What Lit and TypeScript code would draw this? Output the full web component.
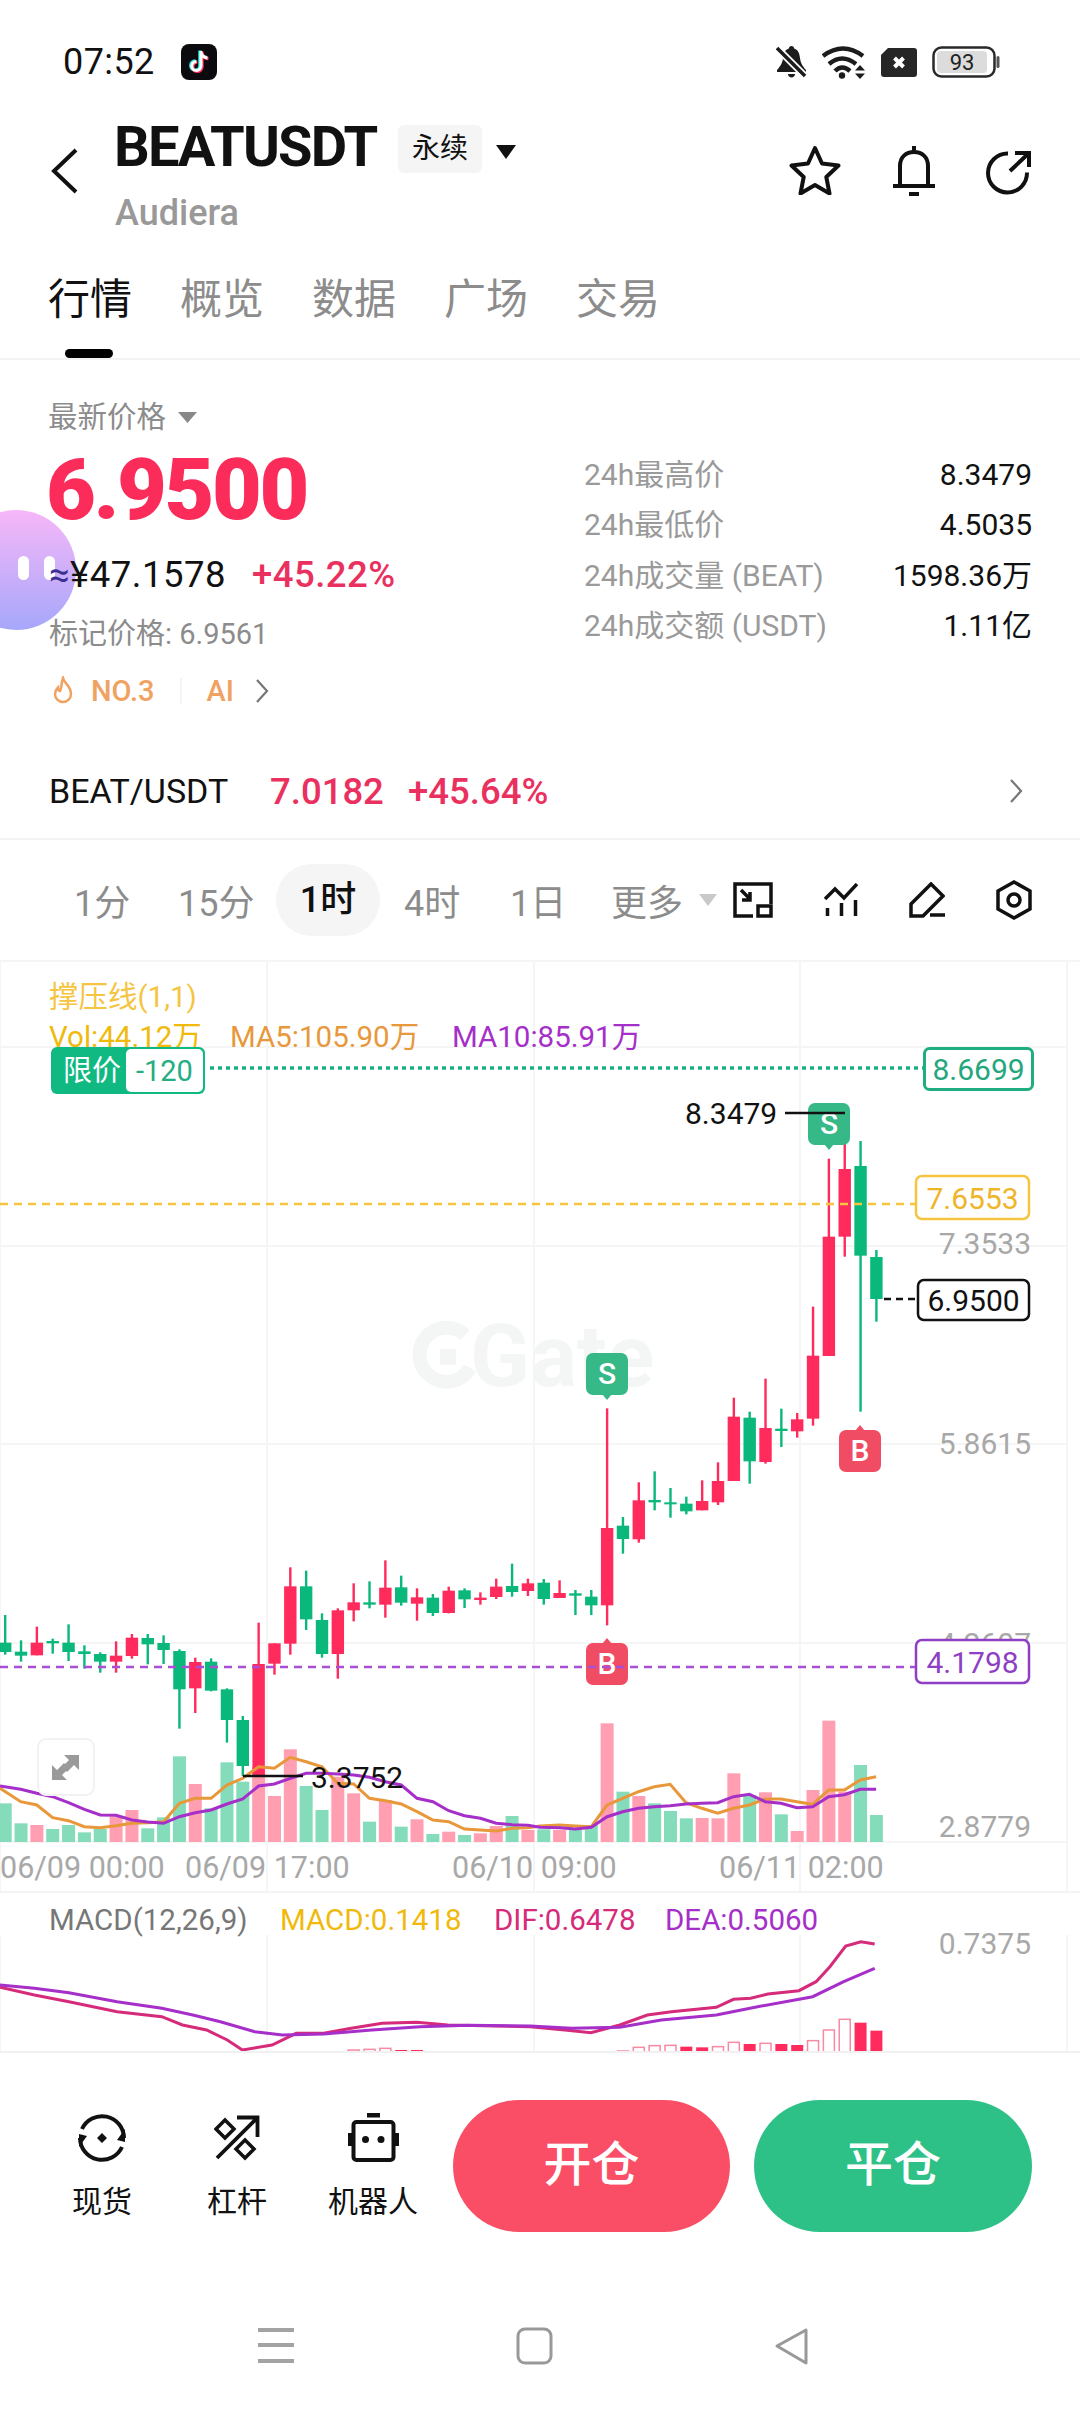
import { LitElement, html, css, svg } from "lit";
import { customElement } from "lit/decorators.js";

const X = (i: number) => 5.2 + 15.84 * i;
type C = [string, number, number, number, number];
// colour, body top, body bottom, wick top, wick bottom — measured in zoom rows
const c8: C[] = [
  ["g",488,516,405,524],["g",515,527,481,545],["r",488,526,440,526],["g",483,490,476,521],["g",488,516,433,543],
  ["g",514,522,496,566],["g",522,545,517,578],["r",527,545,484,578],["r",473,528,462,536],["g",474,493,462,553],
  ["g",489,510,466,552],["g",513,628,508,746],["r",546,625,533,699],["g",545,632,535,634],["g",628,720,625,788],
  ["g",720,858,708,888],["r",552,888,428,888],["r",490,551,490,584],["r",319,491,262,524],["g",319,418,272,450],
  ["g",420,522,400,533],["r",391,522,385,596],["r",367,391,310,424],["g",367,374,304,385],["r",323,374,241,413],
  ["g",322,368,287,377],["r",352,371,325,422],["g",353,399,342,408],["r",332,399,320,400],["g",331,358,325,384],
  ["r",353,360,337,374],["r",320,351,296,357],["g",318,336,251,350],["r",310,333,296,348],
];
const c4: C[] = [
  ["g",638,687,627,704],["r",669,684,631,684],["g",670,677,660,735],["g",680,706,660,735],["r",474,706,115,766],
  ["g",467,507,441,551],["r",391,508,337,518],["g",390,397,304,421],["g",397,403,354,443],["g",401,424,380,433],
  ["r",393,421,331,421],["r",333,397,277,405],["r",140,333,83,333],["g",143,274,125,341],["r",174,276,26,281],
  ["g",176,183,116,231],["r",148,184,129,203],
];
const c7: C[] = [
  ["r",827,1016,680,1037],["r",470,828,236,828],["r",267,470,190,530],["g",258,527,183,995],["g",531,657,510,725],
];
const candles: C[] = [
  ...c8.map(([k,a,b,c,d]) => [k,1480+a/3,1480+b/3,1480+c/3,1480+d/3] as C),
  ...c4.map(([k,a,b,c,d]) => [k,1370+a/3,1370+b/3,1370+c/3,1370+d/3] as C),
  ...c7.map(([k,a,b,c,d]) => [k,1080+a/3,1080+b/3,1080+c/3,1080+d/3] as C),
];
const volTops = [970,1030,1035,1047,1035,1057,1047,1010,990,1045,1012,829,912,985,847,905,860,948,808,918,990,890,940,1025,960,1040,1018,1062,1055,1065,1060,1038,1008,1050,1048,1050,1050,1035,730,935,948,970,993,1015,1014,1015,880,945,937,1003,1053,930,722,935,855,1005];

const pts8 = (a: number[][]) => a.map(([x, y]) => `${(x / 2.904).toFixed(1)},${(1480 + y / 3).toFixed(1)}`);
const pts9 = (a: number[][]) => a.map(([x, y]) => `${(540 + x / 2.904).toFixed(1)},${(1480 + y / 3).toFixed(1)}`);
const pts5 = (a: number[][]) => a.map(([x, y]) => `${(x / 1.452).toFixed(1)},${(1670 + y / 3).toFixed(1)}`).join(" ");

const ma5 = [...pts8([[0,925],[60,965],[107,975],[153,1013],[199,1022],[245,1040],[291,1043],[337,1037],[383,1030],[429,1028],[475,1025],[521,970],[567,955],[613,955],[659,915],[705,895],[751,860],[797,865],[843,832],[889,845],[935,860],[981,910],[1027,912],[1073,955],[1119,962],[1165,972],[1211,995],[1257,1020],[1303,1025],[1349,1047],[1395,1050],[1441,1053],[1487,1045],[1533,1043]]),
  ...pts9([[0,1038],[57,1035],[103,1038],[149,1040],[195,975],[240,955],[286,935],[332,920],[378,913],[424,968],[470,985],[516,1000],[562,985],[608,975],[654,957],[700,957],[746,965],[792,973],[838,930],[884,930],[930,900],[976,890]])].join(" ");
const ma10 = [...pts8([[0,918],[60,928],[107,940],[153,950],[199,968],[245,988],[291,1005],[337,1006],[383,1020],[429,1026],[475,1030],[521,1010],[567,998],[613,990],[659,972],[705,957],[751,918],[797,912],[843,895],[889,880],[935,880],[981,882],[1027,885],[1073,892],[1119,905],[1165,915],[1211,955],[1257,965],[1303,992],[1349,1007],[1395,1015],[1441,1030],[1487,1034],[1533,1036]]),
  ...pts9([[0,1042],[57,1043],[103,1047],[149,1042],[195,1010],[240,995],[286,985],[332,980],[378,977],[424,972],[470,970],[516,968],[562,950],[608,943],[654,965],[700,970],[746,983],[792,980],[838,950],[884,944],[930,928],[976,928]])].join(" ");
const dif = pts5([[0,952],[50,975],[100,995],[170,1025],[235,1040],[265,1065],[300,1080],[330,1110],[352,1140],[395,1125],[430,1090],[470,1090],[510,1075],[555,1060],[605,1057],[650,1065],[720,1068],[770,1070],[820,1080],[858,1088],[900,1065],[940,1035],[975,1025],[1040,1012],[1065,988],[1090,985],[1115,972],[1160,962],[1185,935],[1205,890],[1228,828],[1250,815],[1270,822]]);
const dea = pts5([[0,945],[50,955],[100,968],[170,995],[235,1015],[280,1035],[320,1055],[370,1085],[410,1095],[470,1092],[540,1080],[610,1070],[680,1066],[770,1068],[830,1075],[900,1072],[960,1050],[1040,1035],[1100,1010],[1180,980],[1225,935],[1270,895]]);
// MACD histogram: candle index, top in zoom rows, hollow?
const hist: [number, number, boolean][] = [[22,1140,true],[23,1138,true],[24,1135,true],[25,1140,false],[26,1140,false],[39,1143,true],[40,1132,true],[41,1127,true],[42,1126,true],[43,1130,false],[44,1132,false],[45,1130,true],[46,1117,true],[47,1122,false],[48,1120,true],[49,1122,false],[50,1125,false],[51,1112,true],[52,1080,true],[53,1048,true],[54,1058,false],[55,1082,false]];

const RED = "#ff2b5c", GREEN = "#09b87a";

const badge = (x: number, y: number, t: string, sell: boolean) => svg`
  <g>
    <rect x=${x} y=${y} width="42" height="42" rx="7" fill=${sell ? "#37b887" : "#f04c64"}></rect>
    ${sell
      ? svg`<path d="M${x + 16} ${y + 41}h10l-5 6z" fill="#37b887"></path>`
      : svg`<path d="M${x + 16} ${y + 1}h10l-5 -6z" fill="#f04c64"></path>`}
    <text class="badge" x=${x + 21} y=${y + 31} text-anchor="middle">${t}</text>
  </g>`;

@customElement("app-root")
export class AppRoot extends LitElement {
  static styles = css`
    :host { display: block; width: 1080px; height: 2412px; background: #fff; overflow: hidden; position: relative;
      font-family: Roboto, "Noto Sans CJK SC", sans-serif; color: #111; }
    svg { display: block; }
    .status { height: 115px; padding: 43px 80px 0 63px; box-sizing: border-box; display: flex; align-items: flex-start; }
    .time { font-size: 36px; line-height: 38px; width: 118px; letter-spacing: .4px; }
    .tt { margin-top: 1px; }
    .status-right { margin-left: auto; margin-top: 2px; display: flex; align-items: center; gap: 15px; }
    .header { height: 125px; display: flex; position: relative; box-sizing: border-box; padding-left: 50px; }
    .back { margin-top: 33px; width: 65px; }
    .title-row { display: flex; align-items: flex-start; height: 60px; margin-top: 2px; }
    .sym { width: 283px; margin-left: -1px; margin-right: 1px; font-size: 56px; font-weight: 700; letter-spacing: -1.8px; line-height: 60px; }
    .tag { margin-top: 8px; background: #f5f5f5; border-radius: 6px; width: 84px; height: 48px; font-size: 28px; line-height: 48px; text-align: center; }
    .tri { margin: 28px 0 0 14px; }
    .name { font-size: 36px; font-weight: 500; color: #999; line-height: 44px; margin-top: 14px; }
    .hd-icons { margin-left: auto; margin-right: 48px; margin-top: 30px; display: flex; align-items: flex-start; gap: 49.5px; }
    .share { margin-top: 5px; }
    .tabs { height: 120px; box-sizing: border-box; border-bottom: 2px solid #f3f3f3; display: flex; gap: 48px; padding: 35px 0 0 48px; position: relative; font-size: 42px; line-height: 50px; color: #8c8c8c; }
    .tabs .on { color: #111; }
    .tabs i { position: absolute; left: 65px; top: 109px; width: 48px; height: 9px; border-radius: 5px; background: #000; }
    .info { height: 480px; box-sizing: border-box; padding: 37px 48px 0 49px; border-bottom: 2px solid #f3f3f3; }
    .info-top { display: flex; height: 345px; }
    .left { width: 535px; }
    .latest { display: flex; align-items: center; gap: 12px; font-size: 29.5px; line-height: 40px; color: #8c8c8c; margin-left: -1px; }
    .price { font-size: 86px; font-weight: 900; line-height: 90px; margin: 8px 0 0 -3px; color: #fb2c5a; letter-spacing: -2.4px; }
    .yen { display: flex; gap: 26px; font-size: 36.5px; line-height: 44px; margin-top: 18px; letter-spacing: .5px; position: relative; z-index: 2; }
    .yen .approx { color: #3b2f8f; }
    .yen .chg { color: #ea305e; font-weight: 500; }
    .mark { font-size: 29px; line-height: 40px; margin-top: 17px; color: #8c8c8c; }
    .tags { display: flex; align-items: center; font-size: 29px; line-height: 40px; margin-top: 17px; color: #f0a262; font-weight: 500; }
    .flame { margin: 0 16px 0 2px; }
    .tags u { width: 2px; height: 26px; background: #f4f4f4; margin: 0 25px; }
    .ai-chev { margin-left: 20px; }
    .right { margin-top: 58px; width: 448px; }
    .stat { display: flex; justify-content: space-between; height: 50.3px; line-height: 40px; font-size: 30px; color: #9a9a9a; }
    .stat span:last-child { color: #111; }
    .pair { height: 98px; display: flex; align-items: center; font-size: 36.5px; color: #ea305e; font-weight: 500; }
    .pair .p1 { width: 221px; color: #111; font-size: 34px; font-weight: 400; }
    .pair .p2 { width: 138px; }
    .pair svg { margin-left: auto; margin-right: 8px; }
    .tf { height: 122px; box-sizing: border-box; border-bottom: 2px solid #f5f5f5; display: flex; position: relative; align-items: center; font-size: 36px; color: #8c8c8c; white-space: nowrap; }
    .tf span { flex: none; text-align: center; }
    .t1 { margin-left: 74px; width: 53px; }
    .t2 { margin-left: 51px; width: 74px; }
    .t3 { margin-left: 24px; background: #f5f5f5; border-radius: 36px; height: 72px; line-height: 72px; width: 104px; color: #111; font-weight: 500; }
    .t4 { margin-left: 24px; width: 56px; }
    .t5 { margin-left: 50px; width: 52px; }
    .t6 { margin-left: 49px; width: 72px; }
    .t-tri { margin-left: 16px; }
    .tf-icons { margin-left: auto; margin-right: 48px; display: flex; align-items: center; gap: 51px; }
    .chart { height: 1091px; overflow: hidden; }
    .gl { stroke: #f5f5f5; stroke-width: 2; }
    .ax { font-size: 30px; fill: #a8a8a8; }
    .dt { font-size: 30.5px; fill: #a8a8a8; }
    .lg { font-size: 29.5px; }
    .lv { font-size: 30px; }
    .badge { font-size: 30px; fill: #fff; font-weight: 500; }
    .wm { font-size: 88px; font-weight: 700; fill: #f4f6f6; }
    .lim { font-size: 29px; }
    .batt { font-size: 22px; }
    .bottom { height: 359px; position: relative; }
    .tool { position: absolute; top: 60px; width: 120px; display: flex; flex-direction: column; align-items: center; font-size: 30px; line-height: 40px; }
    .tool svg { height: 50px; margin-bottom: 19px; }
    .l1 { left: 42px; } .l2 { left: 177px; } .l3 { left: 313px; }
    .btn { position: absolute; top: 47px; height: 132px; border-radius: 66px; color: #fff; font-size: 48px; font-weight: 500; line-height: 130px; text-align: center; }
    .open { left: 453px; width: 277px; background: #f94e66; }
    .close { left: 754px; width: 278px; background: #2dc187; }
    .nav { position: absolute; top: 274px; left: 0; width: 100%; }
    .bubble { position: absolute; left: -44px; top: 510px; width: 120px; height: 120px; border-radius: 60px; background: linear-gradient(180deg, #f6b0f8, #9d9efb); opacity: .9; z-index: 1; }
    .bubble i { position: absolute; top: 46px; width: 11px; height: 24px; border-radius: 6px; background: #fff; }
    .bp1 { left: 62px; } .bp2 { left: 88px; }
  `;

  render() {
    return html`
      <div class="status">
        <div class="time">07:52</div>
        <svg class="tt" width="36" height="36" viewBox="0 0 36 36">
          <rect width="36" height="36" rx="8" fill="#0b0b0f"></rect>
          <path d="M20 7v15a4.6 4.6 0 1 1-4.6-4.6M20 8c.6 3.6 3 5.6 6.5 6" fill="none" stroke="#25f4ee" stroke-width="3.4" transform="translate(-1 -.5)"></path>
          <path d="M20 7v15a4.6 4.6 0 1 1-4.6-4.6M20 8c.6 3.6 3 5.6 6.5 6" fill="none" stroke="#fe2c55" stroke-width="3.4" transform="translate(1 .7)"></path>
          <path d="M20 7v15a4.6 4.6 0 1 1-4.6-4.6M20 8c.6 3.6 3 5.6 6.5 6" fill="none" stroke="#fff" stroke-width="3"></path>
        </svg>
        <div class="status-right">
          <svg width="31" height="34" viewBox="0 0 31 34"><path d="M15.500 1c-1.600 0-2.500 1-2.700 2.400C8.500 5 7.500 8.500 7 13c-.4 4.500-2 7.500-6 12v2h29v-2c-4-4.500-5.500-7.500-6-12-.5-4.500-1.500-8-5.800-9.600C18 2 17.100 1 15.500 1zM12 29h7c0 2-1.700 3.500-3.500 3.500S12 31 12 29z" fill="#1c1c1c"></path><path d="M1 3l28 28" stroke="#fff" stroke-width="7"></path><path d="M1 3l28 28" stroke="#1c1c1c" stroke-width="3.500"></path></svg>
          <svg width="44" height="33" viewBox="0 0 44 33"><path d="M1 10Q21-5 41 10M7 18Q20 7 34 18M13 25Q20 18 28 25" fill="none" stroke="#1c1c1c" stroke-width="4.500"></path><circle cx="20" cy="29.500" r="3.200" fill="#1c1c1c"></circle><path d="M38 19l5 5.500H33zM38 33l5-5.500H33z" fill="#1c1c1c"></path></svg>
          <svg width="36" height="29" viewBox="0 0 36 29"><path d="M7 0h26a3 3 0 0 1 3 3v23a3 3 0 0 1-3 3H3a3 3 0 0 1-3-3V7z" fill="#262626"></path><path d="M13.500 10l9 9M22.500 10l-9 9" stroke="#fff" stroke-width="4"></path></svg>
          <svg width="68" height="32" viewBox="0 0 68 32"><rect x="1.500" y="1.500" width="61" height="29" rx="8" fill="#fff" stroke="#2a2a2a" stroke-width="2.500"></rect><rect x="5" y="5" width="50" height="22" rx="4" fill="#dcdcdc"></rect><rect x="64.500" y="10" width="3" height="12" rx="1.500" fill="#555"></rect><text class="batt" x="30" y="24" text-anchor="middle" fill="#222">93</text></svg>
        </div>
      </div>

      <div class="header">
        <div class="back"><svg width="30" height="46" viewBox="0 0 30 46"><path d="M26 2L4 23l22 21" fill="none" stroke="#111" stroke-width="4"></path></svg></div>
        <div>
          <div class="title-row">
            <div class="sym">BEATUSDT</div>
            <div class="tag">永续</div>
            <svg class="tri" width="20" height="14" viewBox="0 0 20 14"><path d="M0 0h20L10 14z" fill="#111"></path></svg>
          </div>
          <div class="name">Audiera</div>
        </div>
        <div class="hd-icons">
          <svg width="52" height="50" viewBox="0 0 52 50"><path d="M26 3l7 15.500 16.500 2-12.200 11.500 3.200 16.500L26 40l-14.500 8.500L14.700 32 2.500 20.500l16.500-2z" fill="none" stroke="#111" stroke-width="4" stroke-linejoin="round"></path></svg>
          <svg width="46" height="52" viewBox="0 0 46 52"><path d="M23 1v6M9 41V21C9 12 15 7 23 7s14 5 14 14v20M2 41h42M18 49h10" fill="none" stroke="#111" stroke-width="4"></path></svg>
          <svg class="share" width="46" height="46" viewBox="0 0 46 46"><path d="M41 22.500A19.500 19.500 0 1 1 22 3.500M24 21L43 3M29 3h14v14" fill="none" stroke="#111" stroke-width="4"></path></svg>
        </div>
      </div>

      <div class="tabs">
        <span class="on">行情</span><span>概览</span><span>数据</span><span>广场</span><span>交易</span><i></i>
      </div>

      <div class="info">
        <div class="info-top">
          <div class="left">
            <div class="latest">最新价格 <svg width="19" height="11" viewBox="0 0 19 11"><path d="M0 0h19L9.500 11z" fill="#888"></path></svg></div>
            <div class="price">6.9500</div>
            <div class="yen"><span><span class="approx">≈</span>¥47.1578</span><span class="chg">+45.22%</span></div>
            <div class="mark">标记价格: 6.9561</div>
            <div class="tags">
              <svg class="flame" width="24" height="30" viewBox="0 0 24 30"><path d="M12 2c1 5 8 8 8 16a8 8 0 0 1-16 0c0-3 1.500-5 3-6.500 0 2 1 3.500 2 3.500 2-3 1-8 3-13z" fill="none" stroke="#f0a262" stroke-width="2.500"></path></svg>
              <span>NO.3</span><u></u><span>AI</span>
              <svg class="ai-chev" width="16" height="26" viewBox="0 0 16 26"><path d="M3 2l10 11L3 24" fill="none" stroke="#777" stroke-width="2.200"></path></svg>
            </div>
          </div>
          <div class="right">
            <div class="stat"><span>24h最高价</span><span>8.3479</span></div>
            <div class="stat"><span>24h最低价</span><span>4.5035</span></div>
            <div class="stat"><span>24h成交量 (BEAT)</span><span>1598.36万</span></div>
            <div class="stat"><span>24h成交额 (USDT)</span><span>1.11亿</span></div>
          </div>
        </div>
        <div class="pair">
          <span class="p1">BEAT/USDT</span><span class="p2">7.0182</span><span>+45.64%</span>
          <svg width="16" height="26" viewBox="0 0 16 26"><path d="M3 2l10 11L3 24" fill="none" stroke="#777" stroke-width="2.200"></path></svg>
        </div>
      </div>

      <div class="tf">
        <span class="t1">1分</span>
        <span class="t2">15分</span>
        <span class="t3">1时</span>
        <span class="t4">4时</span>
        <span class="t5">1日</span>
        <span class="t6">更多</span>
        <svg class="t-tri" width="18" height="12" viewBox="0 0 18 12"><path d="M0 0h18L9 12z" fill="#c9c9c9"></path></svg>
        <div class="tf-icons">
          <svg width="40" height="36" viewBox="0 0 40 36"><path d="M20 34H2V2h36v20" fill="none" stroke="#111" stroke-width="3.500"></path><rect x="25" y="24" width="13" height="10" fill="none" stroke="#111" stroke-width="3.500"></rect><path d="M8 8l8.500 8.500M17 10v8H9" fill="none" stroke="#111" stroke-width="3.500"></path></svg>
          <svg width="34" height="34" viewBox="0 0 34 34"><path d="M1 16L11 6l9 9L33 1" fill="none" stroke="#111" stroke-width="3.500"></path><path d="M3.500 25v8M17.500 20v13M31.500 17v16" stroke="#111" stroke-width="3.500"></path></svg>
          <svg width="36" height="36" viewBox="0 0 36 36"><path d="M2 22L22 2l12 12-20 20H2zM21 33h15" fill="none" stroke="#111" stroke-width="3.500"></path></svg>
          <svg width="36" height="40" viewBox="0 0 36 40"><path d="M18 2l16 9v18l-16 9-16-9V11z" fill="none" stroke="#111" stroke-width="3.500"></path><circle cx="18" cy="20" r="6" fill="none" stroke="#111" stroke-width="3.500"></circle></svg>
        </div>
      </div>

      <div class="chart">${this.chart()}</div>

      <div class="bottom">
        <div class="tool l1">
          <svg width="50" height="50" viewBox="0 0 50 50"><path d="M5 16A22 22 0 0 1 47 25M45 34A22 22 0 0 1 3 25" fill="none" stroke="#111" stroke-width="4"></path><path d="M25 20l5 5-5 5-5-5zM48 16v13l-8-2zM2 34V21l8 2z" fill="#111"></path></svg>
          现货
        </div>
        <div class="tool l2">
          <svg width="46" height="46" viewBox="0 0 46 46"><path d="M3 43L43 3M23 2.500h20.500V22" fill="none" stroke="#111" stroke-width="3.800"></path><path d="M11 5l9 9-9 9-9-9zM31 25l9 9-9 9-9-9z" fill="none" stroke="#111" stroke-width="3.500"></path></svg>
          杠杆
        </div>
        <div class="tool l3">
          <svg width="51" height="50" viewBox="0 0 51 50"><path d="M19 0h13v4.500H19zM0 20h4v13H0zM47 20h4v13h-4z" fill="#111"></path><rect x="5.500" y="9" width="40" height="38" rx="3" fill="none" stroke="#111" stroke-width="4"></rect><circle cx="17.500" cy="26.500" r="3.500" fill="#111"></circle><circle cx="33" cy="26.500" r="3.500" fill="#111"></circle></svg>
          机器人
        </div>
        <div class="btn open">开仓</div>
        <div class="btn close">平仓</div>
        <svg class="nav" width="1080" height="40" viewBox="0 0 1080 40">
          <path d="M258 3h36M258 18h36M258 34h36" stroke="#a3a3a3" stroke-width="4"></path>
          <rect x="518" y="2" width="33" height="34" rx="7" fill="none" stroke="#999" stroke-width="3"></rect>
          <path d="M806 3L777 19l29 17z" fill="none" stroke="#999" stroke-width="3" stroke-linejoin="round"></path>
        </svg>
      </div>

      <div class="bubble"><i class="bp1"></i><i class="bp2"></i></div>
    `;
  }

  chart() {
    return svg`<svg width="1080" height="1091" viewBox="0 962 1080 1091">
      <defs><clipPath id="mc"><rect x="0" y="1930" width="1080" height="121"></rect></clipPath></defs>
      ${[1047, 1246, 1444, 1643, 1842].map((y) => svg`<line class="gl" x1="0" x2="1066" y1=${y} y2=${y}></line>`)}
      ${[0, 267, 534, 800, 1067].map((x) => svg`<line class="gl" x1=${x} x2=${x} y1="962" y2="1892"></line><line class="gl" x1=${x} x2=${x} y1="1935" y2="2053"></line>`)}
      <line x1="0" x2="1080" y1="1892" y2="1892" stroke="#f4f4f4" stroke-width="2"></line>
      <line x1="0" x2="1080" y1="2052" y2="2052" stroke="#f1f1f1" stroke-width="2"></line>

      <text class="ax" x="1031" y="1654" text-anchor="end">4.2607</text>

      <path d="M465 1335A27 27 0 1 0 470 1368" fill="none" stroke="#f4f6f6" stroke-width="14"></path>
      <rect x="440" y="1349" width="16" height="16" fill="#f4f6f6"></rect>
      <text class="wm" x="470" y="1386">Gate</text>

      ${volTops.map((t, i) => {
        const y = 1480 + t / 3;
        return svg`<rect x=${X(i) - 6.5} y=${y} width="13" height=${1842 - y} fill=${candles[i][0] === "r" ? "#ff9fb1" : "#85dcbb"}></rect>`;
      })}

      ${candles.map(([k, a, b, c, d], i) => svg`
        <rect x=${X(i) - 1.2} y=${c} width="2.400" height=${d - c} fill=${k === "r" ? RED : GREEN}></rect>
        <rect x=${X(i) - 6.2} y=${a} width="12.400" height=${Math.max(b - a, 2)} fill=${k === "r" ? RED : GREEN}></rect>`)}

      <polyline points=${ma5} fill="none" stroke="#e8983a" stroke-width="3"></polyline>
      <polyline points=${ma10} fill="none" stroke="#a52fc8" stroke-width="3"></polyline>

      <text class="lg" x="49" y="1007" fill="#f5c542">撑压线(1,1)</text>
      <text class="lg" x="49" y="1047" fill="#f0b90b">Vol:44.12万</text>
      <text class="lg" x="230" y="1047" fill="#e8983a">MA5:105.90万</text>
      <text class="lg" x="452" y="1047" fill="#a52fc8">MA10:85.91万</text>

      <line x1="210" x2="923" y1="1068" y2="1068" stroke="#1fae82" stroke-width="3.500" stroke-dasharray="4 4"></line>
      <rect x="51" y="1047" width="154" height="47" rx="6" fill="#10b981"></rect>
      <rect x="126" y="1049" width="77" height="43" rx="5" fill="#fff"></rect>
      <text class="lim" x="63" y="1081" fill="#fff">限价</text>
      <text class="lim" x="136" y="1081" fill="#25ad83">-120</text>
      <rect x="924.500" y="1048.500" width="108" height="41" rx="5" fill="#fff" stroke="#1fae82" stroke-width="3"></rect>
      <text class="lv" x="978.500" y="1080" text-anchor="middle" fill="#25a67e">8.6699</text>

      <line x1="0" x2="915" y1="1204" y2="1204" stroke="#f5c542" stroke-width="2.500" stroke-dasharray="8 6"></line>
      <rect x="916" y="1176" width="113" height="43" rx="6" fill="#fff" stroke="#f5c542" stroke-width="2.500"></rect>
      <text class="lv" x="972.500" y="1209" text-anchor="middle" fill="#f0b429">7.6553</text>

      <text class="ax" x="1031" y="1254" text-anchor="end">7.3533</text>
      <text class="ax" x="1031" y="1454" text-anchor="end">5.8615</text>
      <text class="ax" x="1031" y="1837" text-anchor="end">2.8779</text>

      <line x1="884" x2="916" y1="1299" y2="1299" stroke="#111" stroke-width="2.500" stroke-dasharray="7 5"></line>
      <rect x="918" y="1280" width="111" height="40" rx="6" fill="#fff" stroke="#111" stroke-width="2.500"></rect>
      <text class="lv" x="973.500" y="1311" text-anchor="middle" fill="#111">6.9500</text>

      ${badge(808, 1103, "S", true)}
      <line x1="785" x2="845" y1="1113" y2="1113" stroke="#111" stroke-width="2.500"></line>
      <text class="lv" x="685" y="1124" fill="#111">8.3479</text>
      ${badge(586, 1353, "S", true)}
      ${badge(839, 1430, "B", false)}
      ${badge(586, 1643, "B", false)}

      <line x1="0" x2="915" y1="1667" y2="1667" stroke="#a94fd6" stroke-width="2.500" stroke-dasharray="8 6"></line>
      <rect x="916" y="1640" width="113" height="43" rx="6" fill="#fff" stroke="#8f3fc4" stroke-width="2.500"></rect>
      <text class="lv" x="972.500" y="1673" text-anchor="middle" fill="#8f3fc4">4.1798</text>

      <rect x="38" y="1739" width="56" height="56" rx="8" fill="#fff" fill-opacity=".8" stroke="#f2f2f2" stroke-width="2"></rect>
      <path d="M56 1780h-4v-15l5 5 7-7 5 5-7 7 5 5zM79 1755v15l-5-5-7 7-5-5 7-7-5-5z" fill="#9a9a9a"></path>

      <line x1="243" x2="303" y1="1776" y2="1776" stroke="#111" stroke-width="2.500"></line>
      <text class="lv" x="311" y="1788" fill="#111">3.3752</text>

      <text class="dt" x="0" y="1878">06/09 00:00</text>
      <text class="dt" x="185" y="1878">06/09 17:00</text>
      <text class="dt" x="452" y="1878">06/10 09:00</text>
      <text class="dt" x="719" y="1878">06/11 02:00</text>

      <text class="lg" x="49" y="1930" fill="#777">MACD(12,26,9)</text>
      <text class="lg" x="280" y="1930" fill="#f0b90b">MACD:0.1418</text>
      <text class="lg" x="494" y="1930" fill="#d62a7a">DIF:0.6478</text>
      <text class="lg" x="665" y="1930" fill="#a52fc8">DEA:0.5060</text>
      <text class="ax" x="1031" y="1954" text-anchor="end">0.7375</text>

      <g clip-path="url(#mc)">
        ${hist.map(([i, t, hollow]) => {
          const y = 1670 + t / 3;
          return hollow
            ? svg`<rect x=${X(i) - 5.5} y=${y} width="11" height=${2052 - y} fill="#fff" stroke="#f58aa2" stroke-width="1.500"></rect>`
            : svg`<rect x=${X(i) - 6} y=${y} width="12" height=${2052 - y} fill=${RED}></rect>`;
        })}
        <polyline points=${dif} fill="none" stroke="#d62a7a" stroke-width="3"></polyline>
        <polyline points=${dea} fill="none" stroke="#a52fc8" stroke-width="3"></polyline>
      </g>
    </svg>`;
  }
}
